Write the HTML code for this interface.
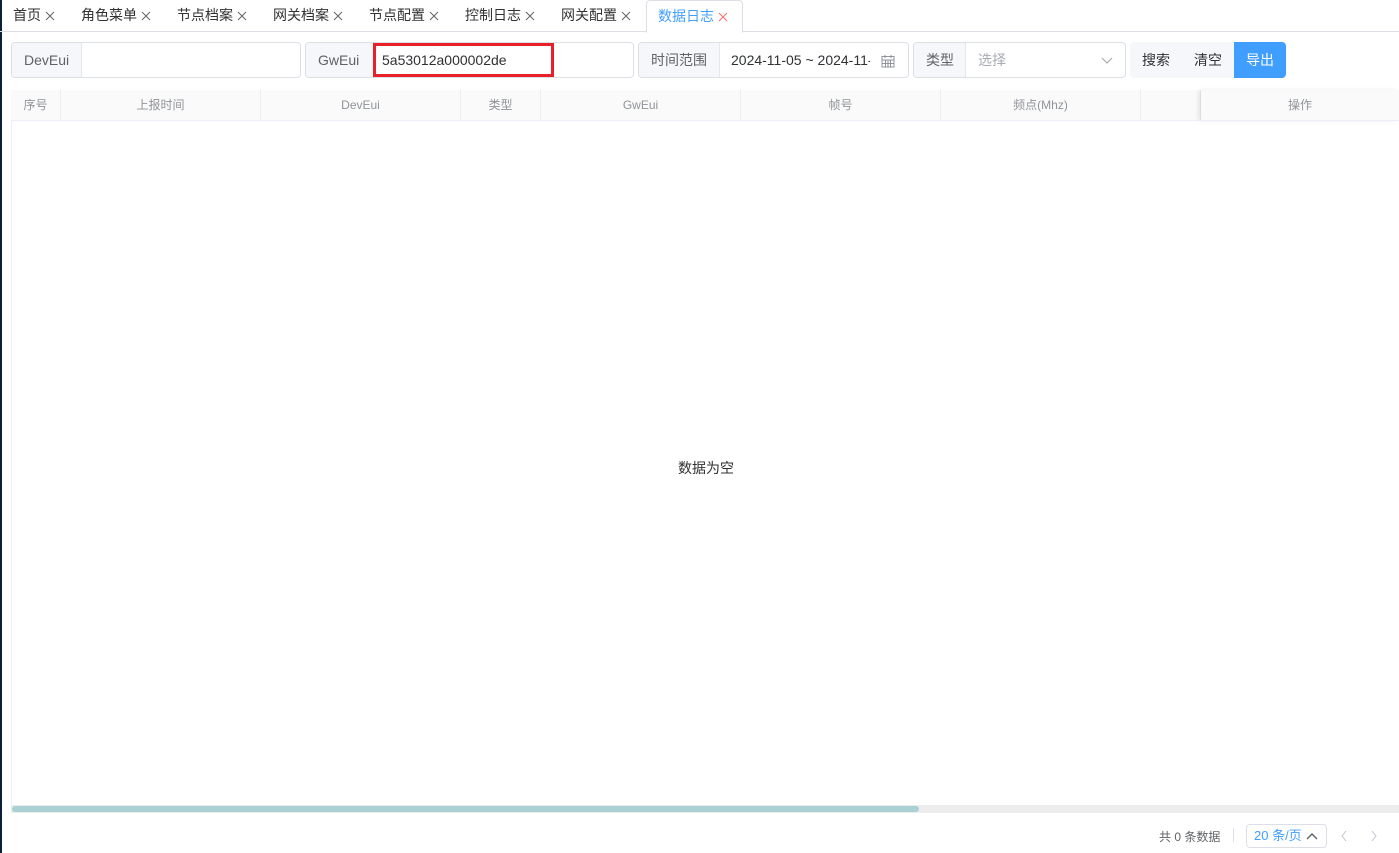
<!DOCTYPE html>
<html><head><meta charset="utf-8"><style>
*{box-sizing:border-box;margin:0;padding:0}
body{width:1399px;height:853px;background:#fff;font-family:"Liberation Sans","Noto Sans CJK SC",sans-serif;position:relative;overflow:hidden;color:#303133}
.abs{position:absolute}
.lb{position:absolute;left:0;top:0;width:2px;height:853px;background:#0a1f3c}
.tabs{position:absolute;left:0;top:0;width:1399px;height:32px;border-bottom:1px solid #dcdfe6}
.tab{position:absolute;top:0;height:32px;line-height:31px;font-size:14px;color:#303133}
.tab svg{margin-left:4px;vertical-align:-1px}
.act{border:1px solid #dcdfe6;border-bottom:1px solid #fff;border-radius:4px 4px 0 0;color:#409eff;background:#fff;height:33px;padding-left:11px}
.box{position:absolute;top:42px;height:36px;border:1px solid #dcdfe6;border-radius:4px;overflow:hidden;background:#fff}
.lab{position:absolute;left:0;top:0;height:34px;background:#f5f7fa;border-right:1px solid #e4e7ed;font-size:14px;color:#606266;line-height:34px;padding-left:12px}
.th{position:absolute;top:90px;height:31px;line-height:31px;font-size:12px;color:#909399;text-align:center;border-right:1px solid #ebeef5;background:#fafafa}
.btn{position:absolute;top:42px;height:36px;line-height:36px;font-size:14px;text-align:center;width:52px;background:#f5f7fa;color:#303133}
</style></head><body>
<div class="lb"></div>
<div class="tabs">
<div class="tab" style="left:13px">首页<svg width="10" height="10" viewBox="0 0 10 10" stroke="#606266" stroke-width="1"><path d="M1 1l8 8M9 1l-8 8"/></svg></div>
<div class="tab" style="left:81px">角色菜单<svg width="10" height="10" viewBox="0 0 10 10" stroke="#606266" stroke-width="1"><path d="M1 1l8 8M9 1l-8 8"/></svg></div>
<div class="tab" style="left:177px">节点档案<svg width="10" height="10" viewBox="0 0 10 10" stroke="#606266" stroke-width="1"><path d="M1 1l8 8M9 1l-8 8"/></svg></div>
<div class="tab" style="left:273px">网关档案<svg width="10" height="10" viewBox="0 0 10 10" stroke="#606266" stroke-width="1"><path d="M1 1l8 8M9 1l-8 8"/></svg></div>
<div class="tab" style="left:369px">节点配置<svg width="10" height="10" viewBox="0 0 10 10" stroke="#606266" stroke-width="1"><path d="M1 1l8 8M9 1l-8 8"/></svg></div>
<div class="tab" style="left:465px">控制日志<svg width="10" height="10" viewBox="0 0 10 10" stroke="#606266" stroke-width="1"><path d="M1 1l8 8M9 1l-8 8"/></svg></div>
<div class="tab" style="left:561px">网关配置<svg width="10" height="10" viewBox="0 0 10 10" stroke="#606266" stroke-width="1"><path d="M1 1l8 8M9 1l-8 8"/></svg></div>
<div class="tab act" style="left:646px;width:97px">数据日志<svg width="10" height="10" viewBox="0 0 10 10" stroke="#f56c6c" stroke-width="1"><path d="M1 1l8 8M9 1l-8 8"/></svg></div>
</div>

<div class="box" style="left:11px;width:290px"><div class="lab" style="width:70px">DevEui</div></div>
<div class="box" style="left:305px;width:329px"><div class="lab" style="width:68px">GwEui</div></div>
<div class="abs" style="left:373px;top:43px;width:181px;height:34px;border:3px solid #e8202a;font-size:14px;line-height:28px;padding-left:6px;color:#303133">5a53012a000002de</div>
<div class="box" style="left:638px;width:271px"><div class="lab" style="width:81px">时间范围</div>
<div class="abs" style="left:92px;top:0;line-height:34px;font-size:14px;color:#303133;width:139px;overflow:hidden;white-space:nowrap">2024-11-05 ~ 2024-11-05</div>
<svg class="abs" style="left:242px;top:11px" width="14" height="14" viewBox="0 0 14 14" fill="none" stroke="#909399" stroke-width="1"><rect x="1" y="2.5" width="12" height="10.5"/><path d="M1 6h12M4 1v3M10 1v3M4.5 6v7M7 6v7M9.5 6v7M1 9.5h12"/></svg>
</div>
<div class="box" style="left:913px;width:213px"><div class="lab" style="width:52px">类型</div>
<div class="abs" style="left:64px;top:0;line-height:34px;font-size:14px;color:#a8abb2">选择</div>
<svg class="abs" style="left:187px;top:12px" width="12" height="10" viewBox="0 0 12 10" fill="none" stroke="#a8abb2" stroke-width="1.2"><path d="M1 3l5 5 5-5"/></svg>
</div>
<div class="btn" style="left:1130px;border-radius:4px 0 0 4px">搜索</div>
<div class="btn" style="left:1182px">清空</div>
<div class="btn" style="left:1234px;background:#409eff;color:#fff;border-radius:0 4px 4px 0">导出</div>

<div class="abs" style="left:11px;top:90px;width:1388px;height:723px;border-left:1px solid #ebeef5"></div>
<div class="abs" style="left:11px;top:90px;width:1388px;height:1px;background:#ebeef5"></div>
<div class="th" style="left:11px;width:50px">序号</div>
<div class="th" style="left:61px;width:200px">上报时间</div>
<div class="th" style="left:261px;width:200px">DevEui</div>
<div class="th" style="left:461px;width:80px">类型</div>
<div class="th" style="left:541px;width:200px">GwEui</div>
<div class="th" style="left:741px;width:200px">帧号</div>
<div class="th" style="left:941px;width:200px">频点(Mhz)</div>
<div class="th" style="left:1141px;width:60px"></div>
<div class="th" style="left:1201px;width:198px;box-shadow:-3px 0 4px rgba(0,0,0,0.08);border-right:none">操作</div>
<div class="abs" style="left:11px;top:120px;width:1388px;height:1px;background:#ebeef5"></div>
<div class="abs" style="left:678px;top:458px;font-size:14px;color:#303133">数据为空</div>
<div class="abs" style="left:11px;top:805px;width:1388px;height:8px;background:#ededed"></div>
<div class="abs" style="left:12px;top:806px;width:907px;height:6px;background:#a9d0d2;border-radius:3px"></div>

<div class="abs" style="left:1159px;top:828px;font-size:12px;color:#606266">共 0 条数据</div>
<div class="abs" style="left:1233px;top:828px;width:1px;height:14px;background:#dcdfe6"></div>
<div class="abs" style="left:1246px;top:824px;width:81px;height:24px;border:1px solid #dcdfe6;border-radius:4px;font-size:13px;color:#409eff;line-height:22px;padding-left:7px">20 条/页</div>
<svg class="abs" style="left:1306px;top:832px" width="12" height="8" viewBox="0 0 12 8" fill="none" stroke="#606266" stroke-width="1.4"><path d="M1 7l5-5 5 5"/></svg>
<svg class="abs" style="left:1340px;top:830px" width="8" height="12" viewBox="0 0 8 12" fill="none" stroke="#c0c4cc" stroke-width="1"><path d="M6 1L2 6l4 5"/></svg>
<svg class="abs" style="left:1370px;top:830px" width="8" height="12" viewBox="0 0 8 12" fill="none" stroke="#c0c4cc" stroke-width="1"><path d="M2 1l4 5-4 5"/></svg>
</body></html>
